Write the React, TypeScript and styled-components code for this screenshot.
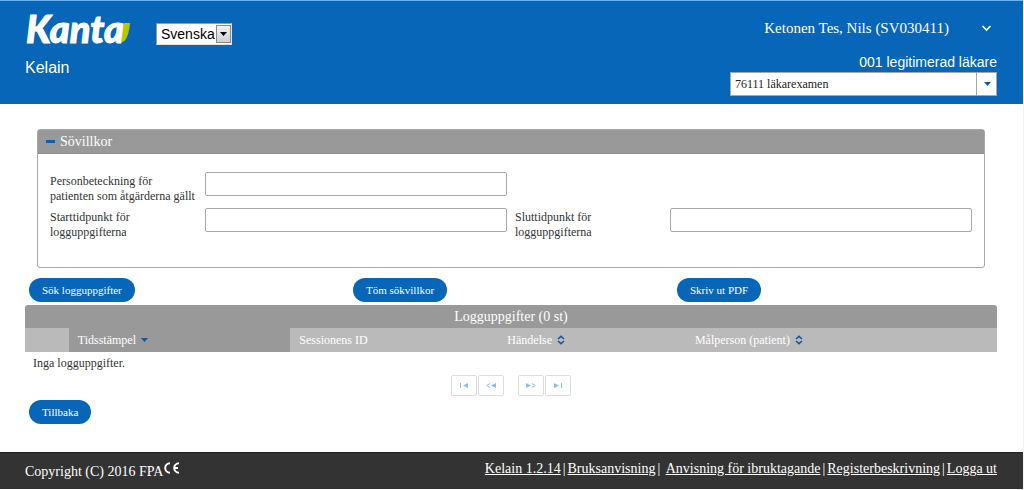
import React from "react";
import styled, { createGlobalStyle } from "styled-components";

const serif = `"Liberation Serif", "Times New Roman", serif`;
const sans = `"Liberation Sans", Arial, sans-serif`;
const blue = "#0866b9";

const GlobalStyle = createGlobalStyle`
  * { box-sizing: border-box; }
  body { margin: 0; background: #fff; color: #333; font-family: ${serif}; font-size: 12px; line-height: 15px; }
  button, input, select { font-family: inherit; }
`;

const Page = styled.div`
  border-right: 1px solid #f4f4f4;
`;

const Header = styled.header`
  display: flex;
  justify-content: space-between;
  padding: 11px 26px 8px 25px;
  border-top: 1px solid #74b2ec;
  background: ${blue};
  color: #fff;
`;

const BrandRow = styled.div`
  display: flex;
  align-items: center;
  gap: 20px;
`;

const Logo = styled.svg`
  display: block;
  width: 111px;
  height: 44px;
  overflow: visible;
`;

const Product = styled.div`
  margin-top: 2px;
  font: 16px/20px ${sans};
`;

const SelectBox = styled.span`
  display: grid;
  > * { grid-area: 1 / 1; }
`;

const ArrowBox = styled.span<{ $raised?: boolean }>`
  justify-self: end;
  display: flex;
  align-items: center;
  justify-content: center;
  width: ${(p) => (p.$raised ? 15 : 21)}px;
  margin: ${(p) => (p.$raised ? "2px 1px" : "0")};
  border: ${(p) => (p.$raised ? "1px solid #8a8a8a" : "0 solid #a8a8a8")};
  border-left-width: 1px;
  background: ${(p) => (p.$raised ? "linear-gradient(#f2f2f2, #cfcfcf)" : "transparent")};
  pointer-events: none;
`;

const LanguageSelect = styled.select`
  appearance: none;
  width: 76px;
  height: 22px;
  padding: 0 0 0 4px;
  border: 1px solid #9a9a9a;
  border-right-color: #e3e3e3;
  border-bottom-color: #e3e3e3;
  border-radius: 0;
  background: #fff;
  color: #000;
  font: 14px/20px ${sans};
`;

const RoleSelect = styled.select`
  appearance: none;
  width: 267px;
  height: 24px;
  padding: 0 24px 0 4px;
  border: 1px solid #a8a8a8;
  border-radius: 0;
  background: #fff;
  color: #222;
  font: 12px/20px ${serif};
`;

const UserArea = styled.div`
  display: flex;
  flex-direction: column;
  align-items: flex-end;
`;

const UserButton = styled.button`
  display: flex;
  align-items: center;
  gap: 32px;
  margin: 6px 0 14px;
  padding: 0 5px 0 0;
  border: 0;
  background: none;
  color: #fff;
  font-size: 15px;
  line-height: 20px;
`;

const RoleLabel = styled.label`
  font: 14px/20px ${sans};
`;

const Main = styled.main`
  padding: 25px 26px 28px 25px;
`;

const Panel = styled.section`
  margin: 0 12px;
  border: 1px solid #a8a8a8;
  border-radius: 3px;
`;

const PanelToggle = styled.button`
  display: flex;
  align-items: center;
  gap: 5px;
  width: 100%;
  height: 24px;
  padding: 0 8px;
  border: 0;
  border-bottom: 1px solid #8f8f8f;
  background: #999;
  color: #fff;
  font-size: 14px;
  line-height: 20px;
`;

const SearchForm = styled.form`
  display: grid;
  grid-template-columns: 147px 1fr 147px 1fr;
  column-gap: 8px;
  row-gap: 4px;
  padding: 18px 12px 27px;
`;

const FieldLabel = styled.label`
  padding-top: 2px;
  white-space: nowrap;
`;

const Field = styled.input`
  width: 100%;
  height: 24px;
  padding: 0 4px;
  border: 1px solid #a8a8a8;
  border-radius: 2px;
  background: #fff;
  font-size: 12px;
`;

const RowFill = styled.div`
  grid-column: span 2;
`;

const Actions = styled.div`
  display: grid;
  grid-template-columns: repeat(3, 1fr);
  justify-items: start;
  padding: 10px 0 3px;
`;

const PillButton = styled.button`
  height: 24px;
  margin-left: 4px;
  padding: 0 13px;
  border: 0;
  border-radius: 12px;
  background: ${blue};
  color: #fff;
  font-size: 11px;
  line-height: 20px;
`;

const LogTable = styled.table`
  width: 100%;
  border-collapse: collapse;
  table-layout: fixed;
`;

const Caption = styled.caption`
  height: 23px;
  border-radius: 3px 3px 0 0;
  background: #999;
  color: #fff;
  font-size: 14px;
  line-height: 23px;
`;

const HeadCell = styled.th<{ $width?: number; $sorted?: boolean }>`
  width: ${(p) => (p.$width ? `${p.$width}%` : "auto")};
  height: 24px;
  padding: 0 9px;
  background: ${(p) => (p.$sorted ? "#999" : "#bababa")};
  color: #fff;
  font-size: 12px;
  font-weight: normal;
  text-align: left;
  white-space: nowrap;
`;

const SortButton = styled.button`
  display: flex;
  align-items: center;
  gap: 5px;
  padding: 0;
  border: 0;
  background: none;
  color: inherit;
  font-size: 12px;
  line-height: 20px;
`;

const EmptyCell = styled.td`
  height: 22px;
  padding: 0 8px;
`;

const Pager = styled.nav`
  display: flex;
  justify-content: center;
  gap: 14px;
  padding: 1px 0 4px;
`;

const PagerGroup = styled.div`
  display: flex;
  gap: 1px;
`;

const PagerButton = styled.button`
  display: flex;
  align-items: center;
  justify-content: center;
  width: 26px;
  height: 21px;
  padding: 0;
  border: 1px solid #ddd;
  border-radius: 2px;
  background: #fff;
`;

const Footer = styled.footer`
  display: flex;
  justify-content: space-between;
  flex-wrap: wrap;
  padding: 6px 26px 7px 25px;
  border-top: 1px solid #222;
  background: #333;
  color: #fff;
  font-size: 14px;
  line-height: 20px;
`;

const Copyright = styled.div`
  display: flex;
  align-items: flex-start;
  padding-top: 3px;
`;

const FooterLinks = styled.nav`
  display: flex;
  gap: 2px;
`;

const FooterLink = styled.a`
  color: #fff;
`;

const Triangle = () => (
  <svg width="7" height="4" viewBox="0 0 7 4" aria-hidden="true">
    <path d="M0 0H7L3.5 4Z" fill="#085ca5" />
  </svg>
);

const UpDown = () => (
  <svg width="8" height="10" viewBox="0 0 8 10" aria-hidden="true">
    <path d="M1 4L4 1.3L7 4M1 6L4 8.7L7 6" fill="none" stroke="#15599a" strokeWidth="1.6" />
  </svg>
);

const pagerIcons: Record<string, React.ReactNode> = {
  first: <><path d="M1.5 1V6" /><path d="M9 1V6L4 3.5Z" fill="#8fbde2" stroke="none" /></>,
  previous: <><path d="M4 1.5L0.8 3.5L4 5.5" /><path d="M10 1V6L5 3.5Z" fill="#8fbde2" stroke="none" /></>,
  next: <><path d="M0 1V6L5 3.5Z" fill="#8fbde2" stroke="none" /><path d="M6 1.5L9.2 3.5L6 5.5" /></>,
  last: <><path d="M1 1V6L6 3.5Z" fill="#8fbde2" stroke="none" /><path d="M8.5 1V6" /></>,
};

const PagerItem = ({ kind, label }: { kind: string; label: string }) => (
  <PagerButton type="button" aria-label={label}>
    <svg width="10" height="7" viewBox="0 0 10 7" fill="none" stroke="#8fbde2">
      {pagerIcons[kind]}
    </svg>
  </PagerButton>
);

export default function App() {
  return (
    <Page>
      <GlobalStyle />
      <Header>
        <div>
          <BrandRow>
            <Logo viewBox="0 0 111 44" role="img" aria-label="Kanta">
              <path d="M99 11H105Q104 22 101 27Q99 30 94 31Z" fill="#b4c800" />
              <text x="1" y="31" fill="#fff" stroke="#fff" strokeWidth="1" fontFamily="Lato, sans-serif" fontSize="38" fontWeight="900" fontStyle="italic">
                Kanta
              </text>
            </Logo>
            <SelectBox>
              <LanguageSelect aria-label="Språk" defaultValue="Svenska">
                <option>Svenska</option>
                <option>Suomi</option>
              </LanguageSelect>
              <ArrowBox $raised>
                <svg width="7" height="4" viewBox="0 0 7 4"><path d="M0 0H7L3.5 4Z" fill="#000" /></svg>
              </ArrowBox>
            </SelectBox>
          </BrandRow>
          <Product>Kelain</Product>
        </div>
        <UserArea>
          <UserButton type="button">
            Ketonen Tes, Nils (SV030411)
            <svg width="11" height="7" viewBox="0 0 11 7" fill="none" stroke="#fff" strokeWidth="1.6">
              <path d="M1.5 1L5.5 5L9.5 1" />
            </svg>
          </UserButton>
          <RoleLabel htmlFor="role">001 legitimerad läkare</RoleLabel>
          <SelectBox>
            <RoleSelect id="role" defaultValue="76111 läkarexamen">
              <option>76111 läkarexamen</option>
            </RoleSelect>
            <ArrowBox><Triangle /></ArrowBox>
          </SelectBox>
        </UserArea>
      </Header>

      <Main>
        <Panel>
          <PanelToggle type="button" aria-expanded="true">
            <svg width="9" height="3" viewBox="0 0 9 3"><path d="M0 0H9V3H0Z" fill="#0b5fae" /></svg>
            Sövillkor
          </PanelToggle>
          <SearchForm>
            <FieldLabel htmlFor="person">Personbeteckning för<br />patienten som åtgärderna gällt</FieldLabel>
            <Field id="person" type="text" />
            <RowFill />
            <FieldLabel htmlFor="start">Starttidpunkt för<br />logguppgifterna</FieldLabel>
            <Field id="start" type="text" />
            <FieldLabel htmlFor="end">Sluttidpunkt för<br />logguppgifterna</FieldLabel>
            <Field id="end" type="text" />
          </SearchForm>
        </Panel>

        <Actions>
          <PillButton type="button">Sök logguppgifter</PillButton>
          <PillButton type="button">Töm sökvillkor</PillButton>
          <PillButton type="button">Skriv ut PDF</PillButton>
        </Actions>

        <LogTable>
          <Caption>Logguppgifter (0 st)</Caption>
          <thead>
            <tr>
              <HeadCell $width={4.5} aria-label="Rad" />
              <HeadCell $width={22.8} $sorted aria-sort="descending">
                <SortButton type="button">Tidsstämpel <Triangle /></SortButton>
              </HeadCell>
              <HeadCell $width={21.4}>Sessionens ID</HeadCell>
              <HeadCell $width={19.3}><SortButton type="button">Händelse <UpDown /></SortButton></HeadCell>
              <HeadCell><SortButton type="button">Målperson (patient) <UpDown /></SortButton></HeadCell>
            </tr>
          </thead>
          <tbody>
            <tr><EmptyCell colSpan={5}>Inga logguppgifter.</EmptyCell></tr>
          </tbody>
        </LogTable>

        <Pager aria-label="Sidor">
          <PagerGroup>
            <PagerItem kind="first" label="Första" />
            <PagerItem kind="previous" label="Föregående" />
          </PagerGroup>
          <PagerGroup>
            <PagerItem kind="next" label="Nästa" />
            <PagerItem kind="last" label="Sista" />
          </PagerGroup>
        </Pager>
        <PillButton type="button">Tillbaka</PillButton>
      </Main>

      <Footer>
        <Copyright>
          Copyright (C) 2016 FPA
          <svg width="19" height="12" viewBox="0 0 19 12" fill="none" stroke="#fff" strokeWidth="2" role="img" aria-label="CE">
            <path d="M7 1.2A4.8 4.8 0 1 0 7 10.8M16 1.2A4.8 4.8 0 1 0 16 10.8M11 6H15" />
          </svg>
        </Copyright>
        <FooterLinks>
          <FooterLink href="#version">Kelain 1.2.14</FooterLink>|
          <FooterLink href="#guide">Bruksanvisning</FooterLink>|&nbsp;
          <FooterLink href="#setup">Anvisning för ibruktagande</FooterLink>|
          <FooterLink href="#register">Registerbeskrivning</FooterLink>|
          <FooterLink href="#logout">Logga ut</FooterLink>
        </FooterLinks>
      </Footer>
    </Page>
  );
}
